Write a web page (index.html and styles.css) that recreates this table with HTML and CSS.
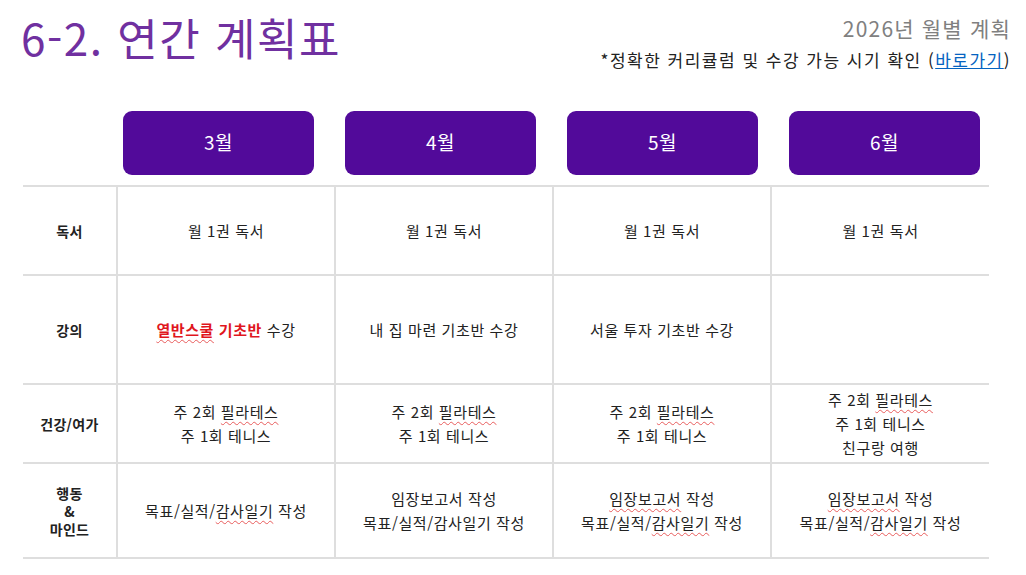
FILE: index.html
```html
<!DOCTYPE html>
<html lang="ko">
<head>
<meta charset="utf-8">
<link rel="stylesheet" href="styles.css">
</head>
<body>
<div class="page">
  <header class="header">
    <h1 class="title">6-2. 연간 계획표</h1>
    <div class="meta">
      <div class="subtitle">2026년 월별 계획</div>
      <div class="note">*정확한 커리큘럼 및 수강 가능 시기 확인 (<a class="link" href="#">바로가기</a>)</div>
    </div>
  </header>
  <div class="months">
    <div class="month">3월</div>
    <div class="month">4월</div>
    <div class="month">5월</div>
    <div class="month">6월</div>
  </div>
  <div class="table">
    <div class="row r1">
      <div class="label"><p class="txt">독서</p></div>
      <div class="cell"><p class="txt">월 1권 독서</p></div>
      <div class="cell"><p class="txt">월 1권 독서</p></div>
      <div class="cell"><p class="txt">월 1권 독서</p></div>
      <div class="cell"><p class="txt">월 1권 독서</p></div>
    </div>
    <div class="row r2">
      <div class="label"><p class="txt">강의</p></div>
      <div class="cell"><p class="txt"><span class="red"><span class="sp">열반스쿨</span> 기초반</span> 수강</p></div>
      <div class="cell"><p class="txt">내 집 마련 기초반 수강</p></div>
      <div class="cell"><p class="txt">서울 투자 기초반 수강</p></div>
      <div class="cell"></div>
    </div>
    <div class="row r3">
      <div class="label"><p class="txt">건강/여가</p></div>
      <div class="cell"><p class="txt">주 2회 <span class="sp">필라테스</span><br>주 1회 테니스</p></div>
      <div class="cell"><p class="txt">주 2회 <span class="sp">필라테스</span><br>주 1회 테니스</p></div>
      <div class="cell"><p class="txt">주 2회 <span class="sp">필라테스</span><br>주 1회 테니스</p></div>
      <div class="cell"><p class="txt">주 2회 <span class="sp">필라테스</span><br>주 1회 테니스<br>친구랑 여행</p></div>
    </div>
    <div class="row r4">
      <div class="label"><p class="txt tight">행동<br>&amp;<br>마인드</p></div>
      <div class="cell"><p class="txt">목표/실적/<span class="sp">감사일기</span> 작성</p></div>
      <div class="cell"><p class="txt">임장보고서 작성<br>목표/실적/감사일기 작성</p></div>
      <div class="cell"><p class="txt"><span class="sp">임장보고서</span> 작성<br>목표/실적/<span class="sp">감사일기</span> 작성</p></div>
      <div class="cell"><p class="txt"><span class="sp">임장보고서</span> 작성<br>목표/실적/<span class="sp">감사일기</span> 작성</p></div>
    </div>
  </div>
</div>
</body>
</html>
```
FILE: styles.css
```css
* { box-sizing: border-box; }
html, body { margin: 0; padding: 0; background: #fff; }
body {
  font-family: "Noto Sans CJK KR", "Noto Sans", sans-serif;
  color: #222;
  width: 1026px;
  height: 575px;
  overflow: hidden;
}
.page { padding: 0 18px 0 23px; }
.header {
  display: flex;
  justify-content: space-between;
  align-items: flex-start;
  height: 111px;
}
.title {
  margin: 10px 0 0 -2px;
  font-size: 44px;
  font-weight: 400;
  color: #7030a0;
  line-height: 54px;
  letter-spacing: 1.5px;
}
.meta {
  display: flex;
  flex-direction: column;
  align-items: flex-end;
  padding-top: 14px;
}
.subtitle {
  font-size: 21px;
  color: #808080;
  line-height: 28px;
  letter-spacing: 1.2px;
  margin-right: -3px;
}
.note {
  font-size: 17px;
  color: #222;
  line-height: 24px;
  margin-top: 6px;
  margin-right: -3px;
  letter-spacing: 1.5px;
}
.link { color: #0563c1; text-decoration: underline; }
.months {
  display: flex;
  gap: 31px;
  padding-left: 100px;
  height: 74px;
}
.month {
  width: 191px;
  height: 64px;
  background: #520a9a;
  border-radius: 9px;
  color: #fff;
  display: flex;
  align-items: center;
  justify-content: center;
  font-size: 19px;
  letter-spacing: 0.5px;
  padding-bottom: 3px;
}
.table {
  width: 966px;
  border-top: 2px solid #dedede;
}
.row {
  display: grid;
  grid-template-columns: 93px 218px 218px 218px 219px;
  border-bottom: 2px solid #dedede;
}
.r1 { height: 89px; }
.r2 { height: 109px; }
.r3 { height: 79px; }
.r4 { height: 95px; }
.label, .cell {
  display: flex;
  align-items: center;
  justify-content: center;
  text-align: center;
}
.txt {
  margin: 0;
  font-size: 15px;
  line-height: 24px;
  letter-spacing: 0.6px;
}
.label .txt { font-weight: 700; font-size: 14px; letter-spacing: 0.3px; }
.label .tight { line-height: 18px; }
.cell { border-left: 2px solid #dedede; }
.red { color: #e0161e; font-weight: 700; }
.sp {
  text-decoration: underline wavy #e85c5c;
  text-decoration-thickness: 1px;
  text-underline-offset: 3px;
}
```
